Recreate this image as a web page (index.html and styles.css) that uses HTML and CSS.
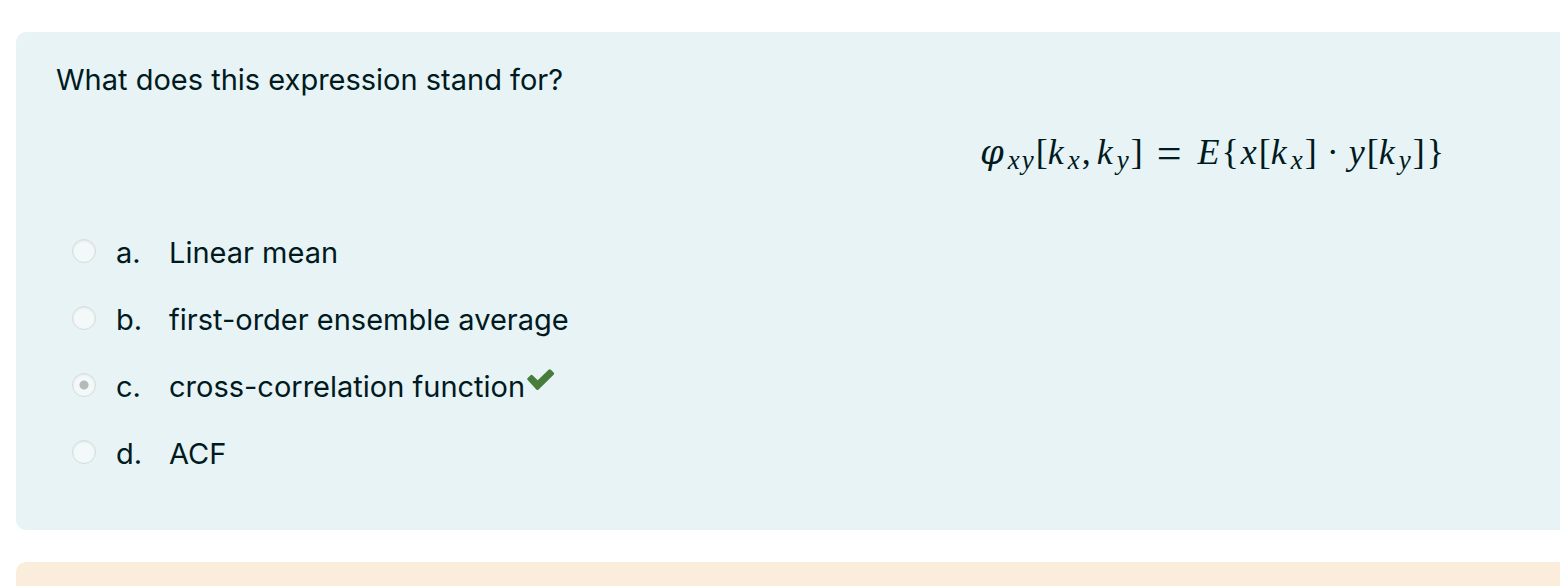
FILE: index.html
```html
<!DOCTYPE html>
<html lang="en">
<head>
<meta charset="utf-8">
<title>Quiz question</title>
<link rel="stylesheet" href="styles.css">
</head>
<body>
<main class="page">
  <form class="question">
    <p class="prompt">What does this expression stand for?</p>
    <div class="formula"><i class="phi">φ</i><sub>x</sub><sub>y</sub><span class="open">[</span><i>k</i><sub>x</sub><span class="comma">,</span><i>k</i><sub>y</sub><span>]</span><span class="relation">=</span><i>E</i><span>{</span><i>x</i><span class="open">[</span><i>k</i><sub>x</sub><span>]</span><span class="operator">·</span><i>y</i><span class="open">[</span><i>k</i><sub>y</sub><span>]</span><span>}</span></div>
    <div class="answers">
      <div class="answer"><input type="radio" name="answer" id="a" disabled><label for="a"><span class="letter">a.</span><span>Linear mean</span></label></div>
      <div class="answer"><input type="radio" name="answer" id="b" disabled><label for="b"><span class="letter">b.</span><span>first-order ensemble average</span></label></div>
      <div class="answer"><input type="radio" name="answer" id="c" checked disabled><label for="c"><span class="letter">c.</span><span>cross-correlation function</span></label><svg class="check" viewBox="0 0 28 22" role="img" aria-label="Correct"><path d="M.7 11.1Q-.3 10 .7 9L3.6 6.3Q4.7 5.4 5.8 6.4L10.7 11.2 21.6.8Q22.8-.2 23.9.8L26.6 3.5Q27.7 4.6 26.6 5.8L11.6 20.5Q10.4 21.6 9.3 20.5Z" fill="#477c3a"/></svg></div>
      <div class="answer"><input type="radio" name="answer" id="d" disabled><label for="d"><span class="letter">d.</span><span>ACF</span></label></div>
    </div>
  </form>
  <section class="feedback" aria-label="Feedback"></section>
</main>
</body>
</html>
```
FILE: styles.css
```css
* { box-sizing: border-box; }
body {
  margin: 0;
  background: #fff;
  color: #001a1e;
  font-family: Inter, "Open Sans", sans-serif;
  font-size: 29px;
  line-height: 44px;
  overflow: hidden;
}
.page {
  display: flex;
  flex-direction: column;
  gap: 32px;
  height: 100vh;
  padding: 32px 0 0 16px;
}
.question {
  flex: none;
  padding: 26px 40px 54px;
  background: #e7f3f5;
  border-radius: 10px 0 0 10px;
}
.prompt { margin: 0; }
.formula {
  display: flex;
  justify-content: flex-end;
  align-items: baseline;
  gap: 2px;
  height: 44px;
  margin-top: 28px;
  padding-right: 76px;
  font-family: "Liberation Serif", serif;
  font-size: 36px;
  line-height: 44px;
}
.formula sub {
  position: relative;
  top: 5px;
  margin-left: 2px;
  font-size: 27px;
  font-style: italic;
  line-height: 1;
  vertical-align: baseline;
}
.formula sub + sub { margin-left: 0; }
.formula .phi {
  font-family: "DejaVu Serif", serif;
  font-size: 34px;
  line-height: 1;
}
.formula .open { margin-right: -2px; }
.formula .comma { margin: 0 4px 0 0; }
.formula .relation {
  align-self: center;
  margin: 4px 14px 0 12px;
  font-size: 44px;
  line-height: 1;
}
.formula .operator { margin: 0 8px; }
.answers {
  display: grid;
  gap: 23px;
  margin-top: 57px;
  padding-left: 16px;
}
.answer { display: flex; align-items: center; }
.answer input {
  appearance: none;
  flex: none;
  width: 24px;
  height: 24px;
  margin: 0 20px 4px 0;
  border: 1px solid #d5dcdd;
  border-radius: 50%;
  background: #f3f8f9;
  box-shadow: inset 0 1px 2px #dfe5e6;
}
.answer input:checked {
  background: radial-gradient(circle, #b4b9b9 4px, #f3f8f9 5px);
}
.answer label { display: flex; }
.letter { width: 53px; }
.check { width: 28px; height: 22px; margin: 0 0 14px 2px; }
.feedback {
  flex: 1;
  background: #fbeddc;
  border-radius: 10px 0 0;
}
```
